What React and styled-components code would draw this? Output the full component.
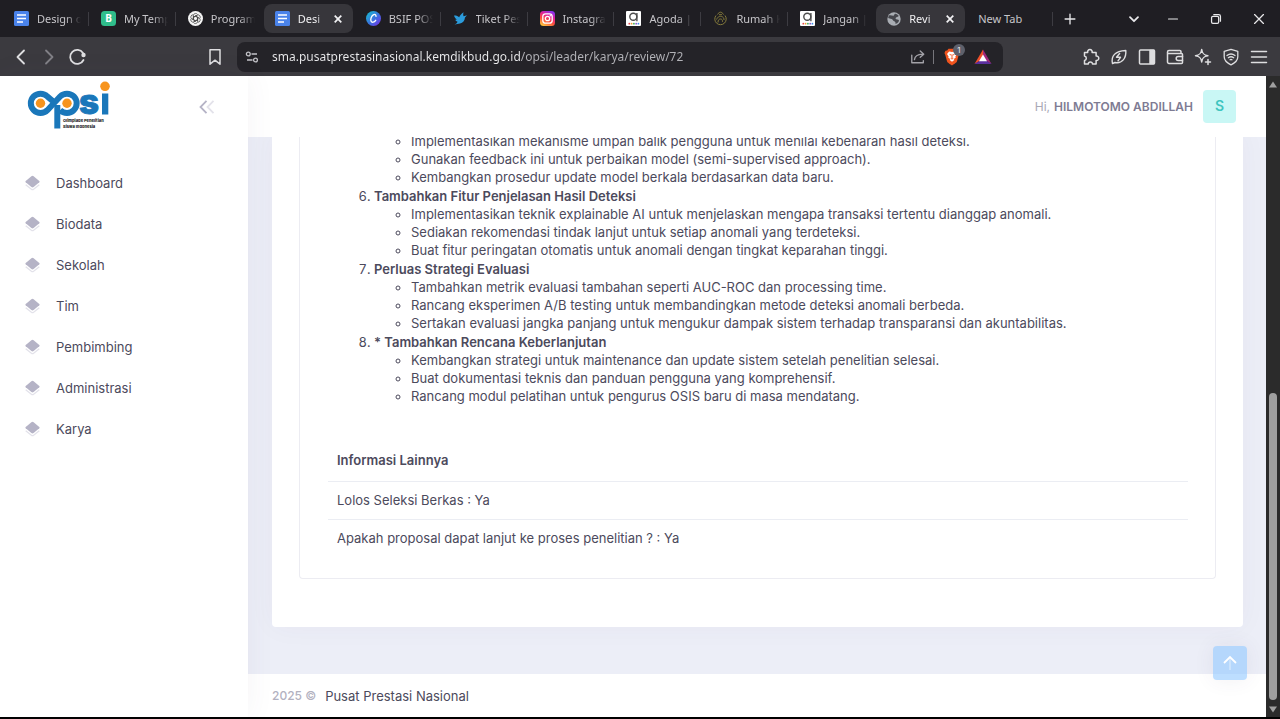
import styled, { createGlobalStyle } from "styled-components";

const GlobalStyle = createGlobalStyle`
* { box-sizing: border-box; }
body {
  margin: 0;
  font-family: Inter, "Open Sans", sans-serif;
  font-size: 13px;
  line-height: 18px;
  color: #4c4a5c;
}
button {
  padding: 0;
  border: 0;
  background: none;
  color: inherit;
  font: inherit;
  cursor: pointer;
}
svg { display: block; flex: none; }
`;

const Screen = styled.div`
display: flex;
flex-direction: column;
height: 100vh;
overflow: hidden;
background: #000;
padding-bottom: 2px;
`;

/* ---------- browser frame ---------- */

const TabStrip = styled.div`
display: flex;
align-items: center;
height: 37px;
flex: none;
background: #1f1e23;
color: #c6c5c9;
font-family: "Noto Sans", "Open Sans", sans-serif;
font-size: 11px;
`;

const TabList = styled.div`
display: flex;
flex: 1;
min-width: 0;
padding: 0 1px 0 2px;
`;

const TabCell = styled.div`
display: flex;
flex: 1 1 0;
align-items: center;
min-width: 0;
height: 29px;
padding: 0 ${(p) => (p.$active ? 11 : 7)}px 0 11px;
margin: 0 1px;
position: relative;
border-radius: 8px;
background: ${(p) => (p.$active ? "#37363b" : "transparent")};
color: ${(p) => (p.$active ? "#f0f0f2" : "inherit")};
&::after {
  content: "";
  position: absolute;
  right: -1px;
  top: 8px;
  width: 1px;
  height: 14px;
  background: ${(p) => (p.$line ? "#3d3c42" : "transparent")};
}
`;

const TabButton = styled.button`
display: flex;
flex: 1;
align-items: center;
gap: 8px;
min-width: 0;
`;

const TabLabel = styled.span`
flex: 1;
overflow: hidden;
white-space: nowrap;
text-align: left;
mask-image: ${(p) => (p.$fade ? "linear-gradient(90deg, #000 65%, transparent)" : "none")};
`;

const CloseTab = styled.button`
display: flex;
margin-left: 8px;
`;

const WindowButton = styled.button`
display: flex;
align-items: center;
justify-content: center;
width: ${(p) => p.$w || 43}px;
height: 36px;
color: #e8e8ea;
`;

const WindowButtons = styled.div`
display: flex;
margin-left: 31px;
`;

const Toolbar = styled.div`
display: flex;
align-items: center;
height: 39px;
flex: none;
padding: 0 7px;
background: #3b3a3f;
color: #dedee0;
`;

const ToolGroup = styled.div`
display: flex;
margin-right: ${(p) => p.$after || 0}px;
`;

const ToolButton = styled.button`
display: flex;
align-items: center;
justify-content: center;
width: 28px;
height: 30px;
color: ${(p) => p.$tint || "inherit"};
`;

const AddressBar = styled.div`
display: flex;
align-items: center;
flex: 1;
height: 30px;
min-width: 0;
margin: 0 74px 0 8px;
padding: 0 8px;
border-radius: 8px;
background: #242328;
`;

const AddressInput = styled.input`
flex: 1;
min-width: 0;
margin-left: 13px;
padding: 0;
border: 0;
outline: 0;
font-family: "Noto Sans", "Open Sans", sans-serif;
font-size: 12px;
line-height: 20px;
color: transparent;
background: linear-gradient(90deg, #ececee 248px, #b3b3b8 248px);
-webkit-background-clip: text;
background-clip: text;
`;

const AddressLine = styled.span`
width: 1px;
height: 14px;
margin: 0 10px 0 1px;
background: #77767c;
`;

const ShieldButton = styled.button`
position: relative;
margin-right: 14px;
`;

const Badge = styled.span`
position: absolute;
left: 9px;
top: -4px;
width: 12px;
height: 12px;
border-radius: 6px;
background: #5d606b;
color: #e9e9ec;
font-size: 8px;
line-height: 12px;
text-align: center;
`;

/* ---------- page ---------- */

const Page = styled.div`
display: flex;
flex: 1;
min-height: 0;
background: #fff;
`;

const Sidebar = styled.aside`
position: relative;
z-index: 1;
width: 248px;
flex: none;
background: #fff;
box-shadow: 0 0 28px rgba(82, 63, 105, 0.06);
`;

const Brand = styled.div`
display: flex;
align-items: center;
justify-content: space-between;
height: 61px;
padding: 0 33px 0 24px;
`;

const Menu = styled.nav`
display: flex;
flex-direction: column;
padding-top: 25px;
`;

const MenuLink = styled.a`
display: flex;
align-items: center;
gap: 16px;
height: 41px;
padding-left: 25px;
color: #4c4a5c;
text-decoration: none;
`;

const Main = styled.div`
display: flex;
flex-direction: column;
position: relative;
flex: 1;
min-width: 0;
background: #eceef7;
`;

const TopBar = styled.header`
display: flex;
align-items: center;
justify-content: flex-end;
height: 61px;
flex: none;
padding-right: 30px;
background: #fff;
font-size: 12px;
color: #a9a8b6;
`;

const UserName = styled.b`
margin: 0 10px 0 4px;
font-weight: 600;
color: #7e7b93;
`;

const Avatar = styled.span`
width: 33px;
height: 33px;
border-radius: 4px;
background: #c9f7f5;
color: #3fc5bf;
font-size: 14px;
font-weight: 600;
line-height: 32px;
text-align: center;
`;

const Scroller = styled.main`
display: flex;
flex: 1;
flex-direction: column;
justify-content: flex-end;
min-height: 0;
overflow: hidden;
padding: 0 23px 47px 24px;
`;

const CardBox = styled.section`
flex: none;
padding: 0 27px 48px;
border-radius: 0 0 4px 4px;
background: #fff;
box-shadow: 0 0 28px rgba(82, 63, 105, 0.04);
`;

const ReviewFrame = styled.div`
padding: 0 27px 21px 28px;
border: 1px solid #ececf2;
border-top: 0;
border-radius: 0 0 4px 4px;
`;

const StepList = styled.ol`
margin: 0 0 45px;
padding-left: 46px;
`;

const Step = styled.li`
padding-bottom: 1px;
list-style-type: ${(p) => (p.$continued ? "none" : "decimal")};
`;

const StepTitle = styled.b`
font-weight: 600;
`;

const PointList = styled.ul`
margin: 0;
padding-left: 37px;
list-style-type: circle;
`;

const InfoTable = styled.table`
width: 100%;
border-collapse: collapse;
text-align: left;
th {
  padding: 0 9px 12px;
  font-weight: 600;
}
td {
  padding: 9px 9px 10px;
  border-top: 1px solid #ebedf3;
}
`;

const Footer = styled.footer`
display: flex;
align-items: center;
gap: 9px;
height: 43px;
flex: none;
padding-left: 24px;
background: #fff;
color: #b2b1bf;
font-size: 12px;
font-weight: 500;
a {
  color: #4c4a5c;
  font-size: 13px;
  font-weight: 400;
  text-decoration: none;
}
`;

const ToTop = styled.button`
position: absolute;
right: 19px;
bottom: 37px;
display: flex;
align-items: center;
justify-content: center;
width: 34px;
height: 34px;
border-radius: 4px;
background: rgba(145, 200, 255, 0.6);
box-shadow: 0 0 20px rgba(82, 63, 105, 0.08);
`;

const Scrollbar = styled.div`
display: flex;
flex-direction: column;
align-items: center;
width: 14px;
flex: none;
padding: 5px 0 4px;
background: #2b2b2b;
`;

const Track = styled.div`
display: flex;
flex: 1;
flex-direction: column;
width: 8px;
padding: 4px 0 6px;
&::before {
  content: "";
  flex: 301;
}
`;

const Thumb = styled.div`
flex: 307;
border-radius: 4px;
background: #9f9f9f;
`;

/* ---------- icons ---------- */

const Line = ({ size = 18, w = 1.4, children }) => (
  <svg width={size} height={size} viewBox="0 0 18 18" fill="none" stroke="currentColor" strokeWidth={w} strokeLinecap="round" strokeLinejoin="round">
    {children}
  </svg>
);

const DocsIcon = () => (
  <svg width="15" height="15" viewBox="0 0 15 15">
    <rect width="15" height="15" rx="1.5" fill="#4a83ea" />
    <path d="M3 4h9M3 7.5h9M3 11h6" stroke="#fff" strokeWidth="1.7" />
  </svg>
);

const LetterIcon = () => (
  <svg width="15" height="15" viewBox="0 0 15 15">
    <rect width="15" height="15" rx="3.5" fill="#2fbd8b" />
    <text x="7.5" y="11" fill="#fff" fontSize="10" fontWeight="700" textAnchor="middle">B</text>
  </svg>
);

const KnotIcon = () => (
  <svg width="15" height="15" viewBox="0 0 15 15">
    <circle cx="7.5" cy="7.5" r="7.5" fill="#f4f4f4" />
    <g fill="none" stroke="#444" strokeWidth="0.7">
      {[0, 60, 120, 180, 240, 300].map((a) => (
        <path key={a} transform={`rotate(${a} 7.5 7.5)`} d="M5.4 8.700V4.500a2.200 2.200 0 0 1 4.200-.8M5.400 6.300l2.100-1.200 3.400 2" />
      ))}
    </g>
  </svg>
);

const CanvaIcon = () => (
  <svg width="15" height="15" viewBox="0 0 15 15">
    <defs>
      <linearGradient id="canva" x1="0" y1="0" x2="1" y2="1">
        <stop offset="0" stopColor="#12c6cf" />
        <stop offset="0.55" stopColor="#3d6fe0" />
        <stop offset="1" stopColor="#7d2ae8" />
      </linearGradient>
    </defs>
    <circle cx="7.5" cy="7.5" r="7.5" fill="url(#canva)" />
    <path d="M10 5.400C10.200 3.500 8.700 3 7.300 3.900 5.300 5.200 4.300 8.200 5 10c.8 2 3.300 1.500 4.700-.7" fill="none" stroke="#fff" strokeWidth="1.300" strokeLinecap="round" />
  </svg>
);

const BirdIcon = () => (
  <svg width="15" height="15" viewBox="0 0 15 15">
    <path d="M1 4.500c2-.2 3.600.3 5.200 1.700C7 4.200 8.600 2.200 10.600 1.200c-.6 1.700-.5 2.800 0 4L14 4.300 12 6.600c-.3 3.200-2 5.400-5 6-1.600.3-3.500.5-5.500 1.200C3 12.800 4 12 4.500 10.700 3.300 10.300 2.600 9.700 2.200 8.800l1.600-.1C2.400 7.500 1.500 6.200 1 4.500z" fill="#2b9bdb" />
  </svg>
);

const InstaIcon = () => (
  <svg width="15" height="15" viewBox="0 0 15 15">
    <defs>
      <linearGradient id="insta" x1="0.2" y1="1" x2="0.7" y2="0">
        <stop offset="0" stopColor="#ffc93d" />
        <stop offset="0.4" stopColor="#fb4a3f" />
        <stop offset="0.7" stopColor="#e0209a" />
        <stop offset="1" stopColor="#8a32f0" />
      </linearGradient>
    </defs>
    <rect width="15" height="15" rx="3.500" fill="url(#insta)" />
    <g fill="none" stroke="#fff" strokeWidth="1.300">
      <rect x="2.800" y="2.800" width="9.400" height="9.400" rx="2.800" />
      <circle cx="7.500" cy="7.500" r="2.200" />
    </g>
    <circle cx="10.300" cy="4.800" r="0.700" fill="#fff" />
  </svg>
);

const AgodaIcon = () => (
  <svg width="15" height="15" viewBox="0 0 15 15">
    <rect width="15" height="15" rx="1" fill="#fff" />
    <circle cx="7.300" cy="5.800" r="3.500" fill="none" stroke="#4d4d4d" strokeWidth="1.400" />
    <path d="M10.900 2v8.200" stroke="#4d4d4d" strokeWidth="1.400" />
    <circle cx="3.300" cy="12.700" r="0.900" fill="#e5484d" />
    <circle cx="5.600" cy="12.700" r="0.900" fill="#f0a030" />
    <circle cx="7.900" cy="12.700" r="0.900" fill="#3fae5a" />
    <circle cx="10.200" cy="12.700" r="0.900" fill="#8a58c8" />
    <circle cx="12.400" cy="12.700" r="0.900" fill="#3c8ff0" />
  </svg>
);

const CrestIcon = () => (
  <svg width="15" height="15" viewBox="0 0 15 15" fill="none" stroke="#857b3b">
    <path d="M3 4.500a5.700 5.700 0 1 0 9 0" />
    <path d="M4.500 3.500c1-1.700 2-2.300 3-2.300s2 .6 3 2.300M3.500 8.500c1.500-3 3-3.500 5-3 1.700.4 2.600 1.700 2.500 3.500M5 11.500c0-2.500 1-3.500 2.500-3.500s2.200 1.200 2 2.800M6 3.700h3" />
  </svg>
);

const GlobeIcon = () => (
  <svg width="14" height="14" viewBox="0 0 14 14">
    <circle cx="7" cy="7" r="6.700" fill="#a9adb3" />
    <path d="M2 3.500c2-.5 3 .3 4.500.2C7.500 3.500 7 2.200 8 1.800c1.300-.3 3 1 3.800 2.200-1 1.200-2.200.6-3 1.700-.7 1 .4 1.900 1.700 1.700 1.200 0 1.800.8 1.300 1.800-.7 1.400-1.800 2.300-3.300 2.800.3-1.600-.2-2.200-1.200-2.700C5.500 8.500 6 7.500 4.700 7 3.300 6.500 2 6.500 1.200 6c0-1 .2-1.800.8-2.500z" fill="#45464c" />
  </svg>
);

const CloseIcon = () => (
  <svg width="8" height="8" viewBox="0 0 8 8" stroke="#f2f2f4" strokeWidth="1.700">
    <path d="M.7.7l6.600 6.600M7.300.7L.7 7.300" />
  </svg>
);

const TuneIcon = () => (
  <svg width="14" height="14" viewBox="0 0 14 14" fill="none" stroke="#c4c4c9" strokeWidth="1.300">
    <circle cx="3.300" cy="4" r="1.900" />
    <path d="M6.500 4H12M2 10h5.500" />
    <circle cx="10.500" cy="10" r="1.900" />
  </svg>
);

const BraveIcon = () => (
  <svg width="16" height="18" viewBox="0 0 15 17">
    <path d="M4.200.8h6.600l1.300 1.500 1.600.2.900 2.200-.7 1.600-1.700 6.200c-.3 1-1 1.600-4.700 4-3.700-2.400-4.400-3-4.700-4L1.100 6.300.4 4.700l.9-2.200 1.600-.2z" fill="#f0541e" />
    <path d="M7.500 3.700l2.700-.5 2 2.400-1.500 2.400.3 1.300-1.900 1 .6 1-2.200 1.800-2.200-1.800.6-1-1.900-1 .3-1.300-1.500-2.400 2-2.400z" fill="#fff" />
    <path d="M5.200 6l1.600.7M9.800 6l-1.600.7M7.500 6v3.500M6.300 9.800l1.200.6 1.200-.6" stroke="#f0541e" strokeWidth="0.900" fill="none" />
  </svg>
);

const BatIcon = () => (
  <svg width="18" height="16" viewBox="0 0 18 16">
    <path d="M9 .5L.5 15 9 10z" fill="#f0502a" />
    <path d="M9 .5L17.500 15 9 10z" fill="#a0287a" />
    <path d="M.5 15h17L9 9.500z" fill="#5b2f9e" />
    <path d="M9 5.500l-4 6.700h8z" fill="#fff" />
  </svg>
);

const LayersIcon = () => (
  <svg width="15" height="16" viewBox="0 0 15 16">
    <path d="M6.400 1.300Q7.500.4 8.600 1.300l5.700 4.800q.7.600 0 1.200l-5.700 4.800q-1.100.8-2.200 0L.7 7.300Q0 6.700.7 6.100z" fill="#b5b3c6" />
    <path d="M.7 9.800l5.700 4.500q1.100.8 2.200 0l5.700-4.500" fill="none" stroke="#e3e2ea" strokeWidth="1.300" />
  </svg>
);

const OpsiLogo = () => (
  <svg width="88" height="52" viewBox="0 0 88 52" role="img" aria-label="opsi">
    <g fill="none" stroke="#1a77ba" strokeWidth="6">
      <path d="M31 22L23.400 15.500A9.700 9.700 0 1 0 23.400 29.200L36.100 15.500A9.700 9.700 0 1 1 36.100 29.200" />
      <path d="M33.300 24v23.500" />
    </g>
    <circle cx="16.500" cy="22.300" r="4.700" fill="#f7941d" />
    <circle cx="43" cy="22.300" r="4.700" fill="#f7941d" />
    <text x="55" y="33" fill="#1a77ba" stroke="#1a77ba" strokeWidth="1" fontSize="35" fontWeight="800">s</text>
    <rect x="78" y="12.500" width="6.300" height="21" fill="#1a77ba" />
    <circle cx="81" cy="5.300" r="4.800" fill="#f7941d" />
    <g fill="#1d1d1d" fontSize="4" fontWeight="800">
      <text x="39" y="40.500">Olimpiade Penelitian</text>
      <text x="39" y="46.500">Siswa Indonesia</text>
    </g>
  </svg>
);

const tabs = [
  { label: "Design o", icon: DocsIcon, line: true },
  { label: "My Temp", icon: LetterIcon, line: true },
  { label: "Program", icon: KnotIcon },
  { label: "Desi", icon: DocsIcon, active: true },
  { label: "BSIF POS", icon: CanvaIcon, line: true },
  { label: "Tiket Pes", icon: BirdIcon, line: true },
  { label: "Instagra", icon: InstaIcon, line: true },
  { label: "Agoda |", icon: AgodaIcon, line: true },
  { label: "Rumah K", icon: CrestIcon, line: true },
  { label: "Jangan |", icon: AgodaIcon },
  { label: "Revi", icon: GlobeIcon, active: true },
  { label: "New Tab", line: true },
];

const menu = ["Dashboard", "Biodata", "Sekolah", "Tim", "Pembimbing", "Administrasi", "Karya"];

const steps = [
  {
    points: [
      "Implementasikan mekanisme umpan balik pengguna untuk menilai kebenaran hasil deteksi.",
      "Gunakan feedback ini untuk perbaikan model (semi-supervised approach).",
      "Kembangkan prosedur update model berkala berdasarkan data baru.",
    ],
  },
  {
    title: "Tambahkan Fitur Penjelasan Hasil Deteksi",
    points: [
      "Implementasikan teknik explainable AI untuk menjelaskan mengapa transaksi tertentu dianggap anomali.",
      "Sediakan rekomendasi tindak lanjut untuk setiap anomali yang terdeteksi.",
      "Buat fitur peringatan otomatis untuk anomali dengan tingkat keparahan tinggi.",
    ],
  },
  {
    title: "Perluas Strategi Evaluasi",
    points: [
      "Tambahkan metrik evaluasi tambahan seperti AUC-ROC dan processing time.",
      "Rancang eksperimen A/B testing untuk membandingkan metode deteksi anomali berbeda.",
      "Sertakan evaluasi jangka panjang untuk mengukur dampak sistem terhadap transparansi dan akuntabilitas.",
    ],
  },
  {
    title: "* Tambahkan Rencana Keberlanjutan",
    points: [
      "Kembangkan strategi untuk maintenance dan update sistem setelah penelitian selesai.",
      "Buat dokumentasi teknis dan panduan pengguna yang komprehensif.",
      "Rancang modul pelatihan untuk pengurus OSIS baru di masa mendatang.",
    ],
  },
];

const BrowserTabs = () => (
  <TabStrip>
    <TabList>
      {tabs.map(({ label, icon: Icon, active, line }, i) => (
        <TabCell key={i} $active={active} $line={line}>
          <TabButton>
            {Icon && <Icon />}
            <TabLabel $fade={!!Icon}>{label}</TabLabel>
          </TabButton>
          {active && <CloseTab aria-label="Close"><CloseIcon /></CloseTab>}
        </TabCell>
      ))}
    </TabList>
    <WindowButton $w={32}><Line size={16} w={1.5}><path d="M9 3.500v11M3.500 9h11" /></Line></WindowButton>
    <WindowButtons>
      <WindowButton $w={34}><Line size={16} w={2}><path d="M4.500 7L9 11.500 13.500 7" /></Line></WindowButton>
      <WindowButton><Line size={16}><path d="M4 9h10" /></Line></WindowButton>
      <WindowButton>
        <Line size={16}>
          <rect x="4" y="6" width="8" height="8" rx="1.500" />
          <path d="M6.500 4h5.500a2 2 0 0 1 2 2v5.500" />
        </Line>
      </WindowButton>
      <WindowButton><Line size={16}><path d="M4 4l10 10M14 4L4 14" /></Line></WindowButton>
    </WindowButtons>
  </TabStrip>
);

const BrowserToolbar = () => (
  <Toolbar>
    <ToolGroup $after={110}>
      <ToolButton><Line w={1.800}><path d="M12 2.500L5.500 9l6.500 6.500" /></Line></ToolButton>
      <ToolButton $tint="#818086"><Line w={1.800}><path d="M6 2.500L12.500 9 6 15.500" /></Line></ToolButton>
      <ToolButton>
        <Line w={1.800}>
          <path d="M15.500 12A7 7 0 1 1 15 5l.6 1.500" />
          <circle cx="15.500" cy="7" r="1.300" fill="currentColor" />
        </Line>
      </ToolButton>
    </ToolGroup>
    <ToolButton><Line w={1.500}><path d="M4 1.800h10v14.400l-5-4-5 4z" /></Line></ToolButton>
    <AddressBar>
      <TuneIcon />
      <AddressInput aria-label="Address" defaultValue="sma.pusatprestasinasional.kemdikbud.go.id/opsi/leader/karya/review/72" />
      <ToolButton $tint="#a3a2a8">
        <Line size={16} w={1.500}><path d="M2 7v8.500h13V13M5 12c.5-4 3-6 9-6.200M11.500 2.200l4 3.600-4 3.600" /></Line>
      </ToolButton>
      <AddressLine />
      <ShieldButton><BraveIcon /><Badge>1</Badge></ShieldButton>
      <ToolGroup $after={3}><button aria-label="Rewards"><BatIcon /></button></ToolGroup>
    </AddressBar>
    <ToolGroup>
      <ToolButton>
        <Line w={1.500}><path d="M2.500 4.500h3.200a2.300 2.300 0 1 1 4.400 0h4v3.600a2.200 2.200 0 1 1 0 4.300V16h-3.600a2.100 2.100 0 0 0-4.200 0H2.500v-3.400a2.300 2.300 0 0 0 0-4.500z" /></Line>
      </ToolButton>
      <ToolButton>
        <Line w={1.400}>
          <path d="M2.500 15.500C.8 8 5 3 15.800 2.500 16.500 10 12 16 5 14.500M2.500 15.500L5 14.500" />
          <path d="M9.600 5.500L6.500 9.300h4L8 12.800" />
        </Line>
      </ToolButton>
      <ToolButton>
        <Line w={1.500}>
          <rect x="1.500" y="2" width="15" height="14" rx="1" />
          <rect x="12" y="2.500" width="4" height="13" fill="currentColor" />
        </Line>
      </ToolButton>
      <ToolButton>
        <Line w={1.500}>
          <path d="M15 5.500V3.700A1.200 1.200 0 0 0 13.800 2.500H3A1.500 1.500 0 0 0 1.500 4v10A1.500 1.500 0 0 0 3 15.500h12.500a1 1 0 0 0 1-1v-8a1 1 0 0 0-1-1H2" />
          <path d="M16.500 8.500h-4.300a2 2 0 0 0 0 4h4.300" />
        </Line>
      </ToolButton>
      <ToolButton>
        <Line w={1.500}>
          <path d="M7.700 1.500c.6 4.200 2 5.600 6.200 6.200-4.200.6-5.600 2-6.200 6.200C7.100 9.700 5.700 8.300 1.500 7.700 5.700 7.100 7.100 5.700 7.700 1.500z" />
          <path d="M14 11.500v5M11.500 14h5" />
        </Line>
      </ToolButton>
      <ToolButton>
        <Line w={1.300}>
          <path d="M9 1.300l6.800 2v5.500c0 3.800-3 6.300-6.800 8-3.800-1.700-6.800-4.200-6.800-8V3.300z" />
          <path d="M5 7.600c2.500-2 5.500-2 8 0M6.300 9.700c1.700-1.200 3.700-1.200 5.400 0M8 11.800c.7-.4 1.300-.4 2 0" />
        </Line>
      </ToolButton>
      <ToolButton><Line w={1.500}><path d="M1.500 3.500h15M1.500 9h15M1.500 14.500h15" /></Line></ToolButton>
    </ToolGroup>
  </Toolbar>
);

const Side = () => (
  <Sidebar>
    <Brand>
      <OpsiLogo />
      <button aria-label="Toggle">
        <svg width="16" height="14" viewBox="0 0 16 14" fill="none" strokeWidth="1.800">
          <path d="M7.500.8L1.500 7l6 6.200" stroke="#b5b3c6" />
          <path d="M14.500.8L8.500 7l6 6.200" stroke="#e3e2ea" />
        </svg>
      </button>
    </Brand>
    <Menu>
      {menu.map((name) => (
        <MenuLink key={name} href="#">
          <LayersIcon />
          {name}
        </MenuLink>
      ))}
    </Menu>
  </Sidebar>
);

const Review = () => (
  <CardBox>
    <ReviewFrame>
      <StepList start={5}>
        {steps.map(({ title, points }, i) => (
          <Step key={i} $continued={!title}>
            {title && <StepTitle>{title}</StepTitle>}
            <PointList>
              {points.map((point) => <li key={point}>{point}</li>)}
            </PointList>
          </Step>
        ))}
      </StepList>
      <InfoTable>
        <thead>
          <tr><th>Informasi Lainnya</th></tr>
        </thead>
        <tbody>
          <tr><td>Lolos Seleksi Berkas : Ya</td></tr>
          <tr><td>Apakah proposal dapat lanjut ke proses penelitian ? : Ya</td></tr>
        </tbody>
      </InfoTable>
    </ReviewFrame>
  </CardBox>
);

export default function App() {
  return (
    <Screen>
      <GlobalStyle />
      <BrowserTabs />
      <BrowserToolbar />
      <Page>
        <Side />
        <Main>
          <TopBar>
            Hi, <UserName>HILMOTOMO ABDILLAH</UserName>
            <Avatar>S</Avatar>
          </TopBar>
          <Scroller>
            <Review />
          </Scroller>
          <Footer>
            2025 © <a href="#">Pusat Prestasi Nasional</a>
          </Footer>
          <ToTop aria-label="Scroll to top">
            <svg width="14" height="16" viewBox="0 0 14 16" fill="none" stroke="#fff">
              <path d="M7 3v12" strokeWidth="1.500" opacity="0.4" />
              <path d="M1 8l6-6 6 6" strokeWidth="1.800" />
            </svg>
          </ToTop>
        </Main>
        <Scrollbar>
          <svg width="8" height="7" viewBox="0 0 8 7"><path d="M4 .5L8 6.500H0z" fill="#9f9f9f" /></svg>
          <Track><Thumb /></Track>
          <svg width="8" height="7" viewBox="0 0 8 7"><path d="M4 6.500L8 .5H0z" fill="#9f9f9f" /></svg>
        </Scrollbar>
      </Page>
    </Screen>
  );
}
